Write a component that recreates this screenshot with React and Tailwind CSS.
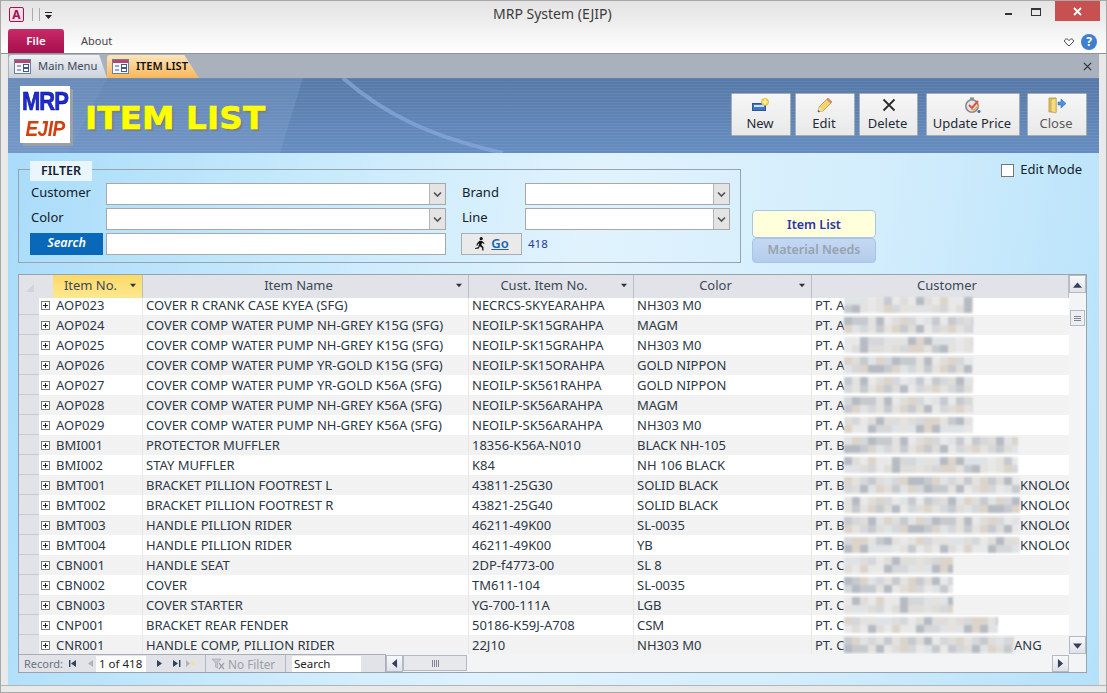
import { useMemo } from 'react';

const rows = [
  ['AOP023', 'COVER R CRANK CASE KYEA (SFG)', 'NECRCS-SKYEARAHPA', 'NH303 M0', 'PT. A', 129, ''],
  ['AOP024', 'COVER COMP WATER PUMP NH-GREY K15G (SFG)', 'NEOILP-SK15GRAHPA', 'MAGM', 'PT. A', 129, ''],
  ['AOP025', 'COVER COMP WATER PUMP NH-GREY K15G (SFG)', 'NEOILP-SK15GRAHPA', 'NH303 M0', 'PT. A', 129, ''],
  ['AOP026', 'COVER COMP WATER PUMP YR-GOLD K15G (SFG)', 'NEOILP-SK15ORAHPA', 'GOLD NIPPON', 'PT. A', 129, ''],
  ['AOP027', 'COVER COMP WATER PUMP YR-GOLD K56A (SFG)', 'NEOILP-SK561RAHPA', 'GOLD NIPPON', 'PT. A', 129, ''],
  ['AOP028', 'COVER COMP WATER PUMP NH-GREY K56A (SFG)', 'NEOILP-SK56ARAHPA', 'MAGM', 'PT. A', 129, ''],
  ['AOP029', 'COVER COMP WATER PUMP NH-GREY K56A (SFG)', 'NEOILP-SK56ARAHPA', 'NH303 M0', 'PT. A', 129, ''],
  ['BMI001', 'PROTECTOR MUFFLER', '18356-K56A-N010', 'BLACK NH-105', 'PT. B', 174, ''],
  ['BMI002', 'STAY MUFFLER', 'K84', 'NH 106 BLACK', 'PT. B', 174, ''],
  ['BMT001', 'BRACKET PILLION FOOTREST L', '43811-25G30', 'SOLID BLACK', 'PT. B', 176, 'KNOLOG'],
  ['BMT002', 'BRACKET PILLION FOOTREST R', '43821-25G40', 'SOLID BLACK', 'PT. B', 176, 'KNOLOG'],
  ['BMT003', 'HANDLE PILLION RIDER', '46211-49K00', 'SL-0035', 'PT. B', 176, 'KNOLOG'],
  ['BMT004', 'HANDLE PILLION RIDER', '46211-49K00', 'YB', 'PT. B', 176, 'KNOLOG'],
  ['CBN001', 'HANDLE SEAT', '2DP-f4773-00', 'SL 8', 'PT. C', 109, ''],
  ['CBN002', 'COVER', 'TM611-104', 'SL-0035', 'PT. C', 109, ''],
  ['CBN003', 'COVER STARTER', 'YG-700-111A', 'LGB', 'PT. C', 109, ''],
  ['CNP001', 'BRACKET REAR FENDER', '50186-K59J-A708', 'CSM', 'PT. C', 154, ''],
  ['CNR001', 'HANDLE COMP, PILLION RIDER', '22J10', 'NH303 M0', 'PT. C', 170, 'ANG'],
];

const mosaicColors = ['#dfddda', '#d5d7da', '#c6c9ce', '#e4e2df', '#dcd4ca', '#e8e8e8', '#b6bbc3', '#e0e3e6'];

// the customer names are pixelated out in the picture
function Mosaic({ width, seed }) {
  const cells = useMemo(() => {
    const out = [];
    let n = seed * 7 + 3;
    for (let i = 0; i < Math.ceil(width / 8) * 2; i++) {
      n = (n * 31 + 11) % 97;
      out.push(mosaicColors[n % mosaicColors.length]);
    }
    return out;
  }, [width, seed]);
  return (
    <span className="grid h-[16px] shrink-0 grid-flow-col grid-rows-2 overflow-hidden blur-[0.8px]" style={{ width }}>
      {cells.map((c, i) => (
        <span key={i} className="w-[8px]" style={{ background: c }} />
      ))}
    </span>
  );
}

const FormIcon = () => (
  <svg width="17" height="15" viewBox="0 0 17 15" className="shrink-0">
    <rect x="0.5" y="0.5" width="16" height="14" fill="#f4f6fa" stroke="#6d7f99" />
    <rect x="1" y="1" width="15" height="3" fill="#b5476f" />
    <path d="M3 7h4M3 11h4" stroke="#3c5a8c" strokeWidth="1.2" />
    <rect x="9.5" y="5.5" width="5" height="3" fill="#fff" stroke="#3c5a8c" />
    <rect x="9.5" y="9.5" width="5" height="3" fill="#fff" stroke="#3c5a8c" />
  </svg>
);

const NewIcon = () => (
  <svg width="18" height="14" viewBox="0 0 18 14">
    <rect x="0.5" y="5.5" width="13" height="7" fill="#3f78c9" stroke="#2a5597" />
    <rect x="2" y="7" width="10" height="2" fill="#cfe2fa" />
    <circle cx="13" cy="4" r="3.6" fill="#f4d75a" stroke="#d9a92a" strokeWidth="0.6" />
    <path d="M10.5 4h5M13 1.5v5" stroke="#fff6c0" strokeWidth="1.2" />
  </svg>
);

const PencilIcon = () => (
  <svg width="18" height="18" viewBox="0 0 18 18">
    <path d="M2 16l1-5L12 2l4 4-9 9z" fill="#f2d66b" stroke="#a98a32" strokeWidth="0.7" />
    <path d="M12 2l4 4-1.6 1.6-4-4z" fill="#d98a7a" />
    <path d="M2 16l1-5 4 4z" fill="#efe2c4" />
    <path d="M2 16l.4-2 1.6 1.6z" fill="#333" />
  </svg>
);

const CrossIcon = () => (
  <svg width="14" height="14" viewBox="0 0 14 14">
    <path d="M1.5 1.5l11 11M12.5 1.5l-11 11" stroke="#2b2b2b" strokeWidth="1.8" />
  </svg>
);

const UpdateIcon = () => (
  <svg width="18" height="18" viewBox="0 0 18 18">
    <circle cx="8" cy="10" r="6.2" fill="#e4e4e4" stroke="#8a8a8a" strokeWidth="1.6" />
    <rect x="6" y="1.5" width="4" height="2" fill="#8a8a8a" />
    <path d="M5 9l3 3 6-7" fill="none" stroke="#d9534f" strokeWidth="2" />
    <path d="M7 13l3 1 5-5" fill="none" stroke="#e8a33d" strokeWidth="1.2" />
    <circle cx="15" cy="15.5" r="1.6" fill="#3c6fb5" />
  </svg>
);

const DoorIcon = () => (
  <svg width="18" height="18" viewBox="0 0 18 18">
    <path d="M1 2h7v14H1z" fill="#e8c65a" stroke="#a98a32" strokeWidth="0.7" />
    <path d="M3 3.5l5-1.5v15l-5-1.5z" fill="#f4dc82" stroke="#a98a32" strokeWidth="0.5" />
    <path d="M10 6h3V3l5 4.5-5 4.5V9h-3z" fill="#4f8fe0" stroke="#2f62ad" strokeWidth="0.5" />
  </svg>
);

const RunnerIcon = () => (
  <svg width="12" height="14" viewBox="0 0 12 14">
    <circle cx="7.2" cy="1.7" r="1.6" fill="#111" />
    <path d="M5.5 3.8L8 4l2.6 2.2-.7.8L8 5.8 7.4 8l2 2 .1 3.6h-1.2L8 10.8 5.8 9.2l-1 2.2L1.3 12l-.2-1.1 3-.7L5.3 6.4l-1.2.5-.8 1.9-1-.4 1-2.5z" fill="#111" />
  </svg>
);

const Triangle = ({ dir, color = '#33415c', size = 7 }) => {
  const pts = { up: '0,6 7,6 3.5,2', down: '0,2 7,2 3.5,6', left: '5.5,0 5.5,7 1.5,3.5', right: '1.5,0 1.5,7 5.5,3.5' };
  return (
    <svg width={size} height={size} viewBox="0 0 7 7" className="shrink-0">
      <polygon points={pts[dir]} fill={color} />
    </svg>
  );
};

const ToolButton = ({ icon, label, width, faded }) => (
  <button
    className={`flex h-[43px] flex-col items-center justify-end rounded-[1px] border border-[#a5adb5] bg-[linear-gradient(#f6f6f6,#e9e9e9)] pb-[4px] text-[13px] leading-[16px] ${
      faded ? 'text-[#5a5a5a]' : 'text-[#1e2a36]'
    } ${width}`}
  >
    <span className="flex h-[20px] items-center justify-center">{icon}</span>
    <span className="-translate-x-[1px]">{label}</span>
  </button>
);

const Combo = ({ width }) => (
  <div className={`flex h-[22px] border border-[#a8a8a8] bg-white ${width}`}>
    <div className="flex-1" />
    <div className="flex w-[16px] items-center justify-center border-l border-[#b5b5b5] bg-[#e4e4e4]">
      <svg width="9" height="7" viewBox="0 0 9 7">
        <path d="M1 1.5l3.5 3.5L8 1.5" fill="none" stroke="#555" strokeWidth="1.7" />
      </svg>
    </div>
  </div>
);

const HeaderCell = ({ label, active, last }) => (
  <div
    className={`relative flex items-center justify-center border-r border-[#b9bec6] pb-[3px] ${
      active ? 'bg-[linear-gradient(#fbd968,#fde890)]' : 'bg-[#e1e3e8]'
    } ${last ? 'pl-[14px]' : 'pr-[14px]'}`}
  >
    <span>{label}</span>
    {!last && (
      <span className="absolute right-[6px] top-[7px]">
        <Triangle dir="down" size={6} color="#333" />
      </span>
    )}
  </div>
);

const ScrollButton = ({ dir, className = '' }) => (
  <div className={`flex h-[18px] w-[17px] shrink-0 items-center justify-center border border-[#b4bac4] bg-[linear-gradient(#f7f8fa,#dfe2e8)] ${className}`}>
    <Triangle dir={dir} size={9} />
  </div>
);

const NavIcon = ({ children, className = '' }) => (
  <svg width="9" height="9" viewBox="0 0 9 9" className={`shrink-0 ${className}`}>
    {children}
  </svg>
);

export default function App() {
  return (
    <div className="flex h-[693px] w-[1107px] flex-col overflow-hidden border border-[#a8a8a8] bg-[#e9e9e9] font-['Noto_Sans',sans-serif] text-[13px] text-[#2c3846]">
      {/* title bar */}
      <div className="flex h-[27px] shrink-0 items-start bg-[linear-gradient(#e4e4e4,#f0f0f0)]">
        <div className="flex w-[400px] items-center gap-[5px] pl-[8px] pt-[6px]">
          <div className="flex h-[15px] w-[15px] items-center justify-center rounded-[2px] border border-[#a8114f] bg-[#f7dbe6] text-[12px] font-bold leading-none text-[#a8114f]">
            A
          </div>
          <div className="ml-[3px] h-[13px] w-[1px] bg-[#aaa]" />
          <div className="ml-[1px] h-[13px] w-[1px] bg-[#aaa]" />
          <svg width="7" height="8" viewBox="0 0 7 8">
            <path d="M0 1h7v1H0zM0 4h7L3.5 8z" fill="#222" />
          </svg>
        </div>
        <div className="flex-1 pl-[92px] pt-[3px] text-[14px] leading-[20px] text-[#3c3c3c]">MRP System (EJIP)</div>
        <div className="mr-[6px] flex items-start">
          <div className="mt-[12px] mr-[19px] h-[2px] w-[7px] bg-[#333]" />
          <div className="mt-[7px] mr-[14px] h-[8px] w-[10px] border border-t-2 border-[#333]" />
          <div className="flex h-[20px] w-[45px] items-center justify-center bg-[#c75050]">
            <svg width="9" height="9" viewBox="0 0 9 9">
              <path d="M1 1l7 7M8 1L1 8" stroke="#fff" strokeWidth="1.8" />
            </svg>
          </div>
        </div>
      </div>

      {/* ribbon tabs */}
      <div className="flex h-[26px] shrink-0 items-end border-b border-[#8e9299] bg-[linear-gradient(#f1f1f1,#ffffff)]">
        <div className="ml-[7px] flex h-[24px] w-[56px] items-center justify-center rounded-t-[3px] bg-[linear-gradient(#c92a68,#a70f4d)] text-[11.5px] font-semibold text-white">
          File
        </div>
        <div className="ml-[17px] flex h-[24px] items-center text-[11px] text-[#444]">About</div>
        <div className="ml-auto mb-[3px] mr-[9px] flex items-center gap-[7px]">
          <svg width="10" height="9" viewBox="0 0 10 9">
            <path d="M5 8L1 4.2C-.2 2.6 1 .8 2.6 1 3.8 1 4.5 1.7 5 2.6 5.5 1.7 6.2 1 7.4 1 9 .8 10.2 2.6 9 4.2z" fill="#fff" stroke="#444" strokeWidth="1" />
          </svg>
          <div className="flex h-[16px] w-[16px] items-center justify-center rounded-full bg-[#3f7fd0] text-[12px] font-bold leading-none text-white">
            ?
          </div>
        </div>
      </div>

      {/* document area */}
      <div className="mx-[7px] flex min-h-0 flex-1 flex-col">
        {/* document tabs */}
        <div className="flex h-[24px] shrink-0 items-end bg-[#a9b1bd] pl-[1px]">
          <div className="flex h-[23px] w-[98px] items-center gap-[7px] rounded-t-[3px] bg-[linear-gradient(#eef0f3,#cdd2da)] pl-[5px] text-[11.2px] text-[#3b4b5e] [clip-path:polygon(0_0,92%_0,100%_100%,0_100%)]">
            <FormIcon />
            Main Menu
          </div>
          <div className="flex h-[23px] w-[92px] items-center gap-[7px] rounded-t-[3px] bg-[linear-gradient(#fde6bd,#f9b659)] pl-[5px] text-[11px] font-semibold text-[#111] [clip-path:polygon(0_0,84%_0,100%_100%,0_100%)]">
            <FormIcon />
            ITEM LIST
          </div>
          <svg width="9" height="9" viewBox="0 0 10 10" className="mb-[7px] ml-auto mr-[7px]">
            <path d="M1 1l8 8M9 1L1 9" stroke="#333" strokeWidth="1.4" />
          </svg>
        </div>

        {/* form header */}
        <div className="relative flex h-[75px] shrink-0 items-start bg-[repeating-linear-gradient(#ffffff08_0px,#ffffff08_1px,#00000008_1px,#00000008_3px),linear-gradient(#5a7dac,#6a91c6)] pl-[12px]">
          <svg width="1091" height="75" viewBox="0 0 1091 75" className="absolute left-0 top-0">
            <path d="M0 0H100L60 75H0z" fill="#8fb0d8" opacity="0.35" />
            <path d="M100 0H295L272 75H60z" fill="#8fb0d8" opacity="0.25" />
            <path d="M335 0C375 35 420 58 495 75" fill="none" stroke="#84a8d8" strokeWidth="4" opacity="0.75" />
          </svg>
          <div className="relative mt-[8px] flex h-[57px] w-[50px] flex-col items-center bg-white pt-[2px] leading-none shadow-[3px_3px_0_#9aa0a8]">
            <span className="origin-top scale-y-[1.2] font-['Liberation_Sans',sans-serif] text-[22px] font-bold tracking-[-1px] text-[#1a2be0] [-webkit-text-stroke:0.5px_#101060]">MRP</span>
            <span className="mt-[8px] origin-top scale-y-[1.15] font-['Liberation_Sans',sans-serif] text-[19px] font-bold italic tracking-[-0.5px] text-[#d23f10]">EJIP</span>
          </div>
          <div className="relative ml-[15px] mt-[20px] font-['DejaVu_Sans',sans-serif] text-[32.5px] font-bold leading-[40px] tracking-[0.2px] text-[#ffff00] [-webkit-text-stroke:0.6px_#ffff00] [text-shadow:2px_2px_1px_#7a7f86]">
            ITEM LIST
          </div>
          <div className="relative ml-auto mr-[12px] mt-[15px] flex">
            <ToolButton icon={<NewIcon />} label="New" width="w-[60px]" />
            <div className="w-[4px]" />
            <ToolButton icon={<PencilIcon />} label="Edit" width="w-[60px]" />
            <div className="w-[4px]" />
            <ToolButton icon={<CrossIcon />} label="Delete" width="w-[59px]" />
            <div className="w-[8px]" />
            <ToolButton icon={<UpdateIcon />} label="Update Price" width="w-[94px]" />
            <div className="w-[7px]" />
            <ToolButton icon={<DoorIcon />} label="Close" width="w-[60px]" faded />
          </div>
        </div>

        {/* form body */}
        <div className="flex min-h-0 flex-1 flex-col bg-[linear-gradient(100deg,#a9dcfa_0%,#c6e9fc_25%,#e0f3fd_50%,#d2edfc_75%,#b4e1fa_100%)] pl-[10px] pr-[12px]">
          <div className="flex h-[110px] shrink-0">
            <div className="relative mt-[16px] h-[94px] w-[723px] border border-[#9aa3ab]">
              <div className="absolute -top-[9px] left-[11px] flex h-[20px] w-[62px] items-center justify-center bg-[#e9f6fd] text-[12.5px] font-semibold text-[#14202c]">
                FILTER
              </div>
              <div className="flex pl-[11px] pt-[13px]">
                <div className="w-[433px]">
                  <div className="flex h-[25px] items-start">
                    <span className="w-[76px] pl-[1px] leading-[18px] text-[#14202c]">Customer</span>
                    <Combo width="w-[340px]" />
                  </div>
                  <div className="flex h-[25px] items-start">
                    <span className="w-[76px] pl-[1px] leading-[18px] text-[#14202c]">Color</span>
                    <Combo width="w-[340px]" />
                  </div>
                  <div className="flex h-[22px] items-start">
                    <div className="mr-[3px] flex h-[22px] w-[73px] items-center justify-center bg-[#0a68b8] pb-[2px] text-[12.5px] font-semibold italic text-white">
                      Search
                    </div>
                    <div className="h-[22px] w-[340px] border border-[#a8a8a8] bg-white" />
                  </div>
                </div>
                <div className="ml-[-2px]">
                  <div className="flex h-[25px] items-start">
                    <span className="w-[64px] pl-[1px] leading-[18px] text-[#14202c]">Brand</span>
                    <Combo width="w-[205px]" />
                  </div>
                  <div className="flex h-[25px] items-start">
                    <span className="w-[64px] pl-[1px] leading-[18px] text-[#14202c]">Line</span>
                    <Combo width="w-[205px]" />
                  </div>
                  <div className="flex h-[22px] items-center">
                    <div className="flex h-[22px] w-[61px] items-center justify-center gap-[5px] border border-[#a5adb5] bg-[#eaeaea] font-semibold text-[#1464b4]">
                      <RunnerIcon />
                      <span className="underline">Go</span>
                    </div>
                    <span className="ml-[6px] text-[11.5px] text-[#2b35a8]">418</span>
                  </div>
                </div>
              </div>
            </div>

            <div className="ml-[11px] mt-[57px] flex w-[124px] flex-col">
              <div className="flex h-[28px] items-center justify-center rounded-[4px] border border-[#a8c4e8] bg-[#ffffdc] pt-[3px] text-[12.5px] font-semibold text-[#2b35a8]">
                Item List
              </div>
              <div className="flex h-[26px] items-center justify-center rounded-[4px] border border-[#a8c4e8] bg-[linear-gradient(#c4d8f2,#b4ccec)] text-[12.5px] font-semibold text-[#98a2ae]">
                Material Needs
              </div>
            </div>

            <div className="ml-auto mr-[5px] mt-[10px] flex h-[14px] items-center gap-[6px] text-[#14202c]">
              <div className="h-[13px] w-[13px] border border-[#777] bg-white" />
              Edit Mode
            </div>
          </div>

          {/* datasheet */}
          <div className="mt-[11px] flex h-[399px] w-[1069px] shrink-0 flex-col border border-[#9aa3ab] bg-white leading-[20px]">
            <div className="flex min-h-0 flex-1">
              <div className="min-w-0 flex-1 overflow-hidden">
                <div className="grid h-[20px] grid-cols-[34px_90px_326px_165px_178px_1fr] text-[#3d4856]">
                  <div className="flex items-center justify-center border-r border-[#e1e3e8] bg-[#e1e3e8]">
                    <span className="mr-[12px] mt-[2px] h-0 w-0 border-b-[8px] border-l-[8px] border-b-[#cfd3da] border-l-transparent" />
                  </div>
                  <HeaderCell label="Item No." active />
                  <HeaderCell label="Item Name" />
                  <HeaderCell label="Cust. Item No." />
                  <HeaderCell label="Color" />
                  <HeaderCell label="Customer" last />
                </div>
                {rows.map((r, i) => (
                  <div
                    key={r[0]}
                    className={`grid h-[20px] grid-cols-[20px_14px_90px_326px_165px_178px_1fr] overflow-hidden ${
                      i % 2 ? 'bg-[#f2f2f2]' : 'bg-white'
                    }`}
                  >
                    <div className="border-b border-[#c8ccd2] bg-[#e1e3e8]" />
                    <div className="flex items-center justify-center">
                      <div className="relative h-[9px] w-[9px] -translate-x-[1px] border border-[#777] bg-white">
                        <div className="absolute left-[1px] top-[3px] h-[1px] w-[5px] bg-[#222]" />
                        <div className="absolute left-[3px] top-[1px] h-[5px] w-[1px] bg-[#222]" />
                      </div>
                    </div>
                    <div className="border-r border-[#e8e8e8] pl-[3px]">{r[0]}</div>
                    <div className="truncate border-r border-[#e8e8e8] pl-[3px]">{r[1]}</div>
                    <div className="border-r border-[#e8e8e8] pl-[3px]">{r[2]}</div>
                    <div className="border-r border-[#e8e8e8] pl-[3px]">{r[3]}</div>
                    <div className="flex items-center overflow-hidden whitespace-nowrap pl-[3px]">
                      <span className="w-[29px] shrink-0">{r[4]}</span>
                      <Mosaic width={r[5]} seed={i} />
                      <span>{r[6]}</span>
                    </div>
                  </div>
                ))}
              </div>
              <div className="flex w-[17px] shrink-0 flex-col items-center bg-[#f3f4f6]">
                <ScrollButton dir="up" />
                <div className="mt-[17px] flex h-[16px] w-[15px] flex-col items-center justify-center gap-[1px] border border-[#b4bac4] bg-[#eceef2]">
                  <div className="h-[1px] w-[7px] bg-[#7d8592]" />
                  <div className="h-[1px] w-[7px] bg-[#7d8592]" />
                  <div className="h-[1px] w-[7px] bg-[#7d8592]" />
                </div>
                <ScrollButton dir="down" className="mt-auto" />
              </div>
            </div>

            {/* record navigator and horizontal scrollbar */}
            <div className="flex h-[18px] shrink-0 bg-[#f3f4f6]">
              <div className="flex w-[367px] items-center border-t border-r border-[#a8adb5] bg-[#e1e3e8] text-[11px] text-[#6a7280]">
                <span className="ml-[5px]">Record:</span>
                <NavIcon className="ml-[5px]">
                  <path d="M1 1h1.4v7H1zM8 1v7L3 4.5z" fill="#33415c" />
                </NavIcon>
                <NavIcon className="ml-[9px]">
                  <path d="M7 1v7L2 4.5z" fill="#b0b5bd" />
                </NavIcon>
                <div className="ml-[1px] h-[16px] w-[50px] bg-white pl-[3px] text-[11.5px] leading-[16px] text-[#222]">1 of 418</div>
                <NavIcon className="ml-[9px]">
                  <path d="M2 1v7l5-3.5z" fill="#33415c" />
                </NavIcon>
                <NavIcon className="ml-[8px]">
                  <path d="M1 1v7l5-3.5zM7 1h1.4v7H7z" fill="#33415c" />
                </NavIcon>
                <NavIcon className="ml-[5px]">
                  <path d="M0 1v7l4-3.5z" fill="#b0b5bd" />
                  <rect x="5" y="2" width="4" height="4" fill="#efe2a8" />
                </NavIcon>
                <div className="ml-[10px] flex h-full w-[81px] items-center border-x border-[#b4bac4] pl-[5px] text-[11.8px] text-[#9aa0aa]">
                  <svg width="15" height="12" viewBox="0 0 15 12" className="mr-[2px] shrink-0">
                    <path d="M1 1h9L6.5 5v5L4.5 9V5z" fill="#c5c9cf" stroke="#9aa0aa" strokeWidth="0.6" />
                    <path d="M8 5l5 6M13 5l-5 6" stroke="#9aa0aa" strokeWidth="1.2" />
                  </svg>
                  No Filter
                </div>
                <div className="ml-[6px] h-[16px] w-[69px] bg-white pl-[2px] text-[11.5px] leading-[16px] text-[#222]">Search</div>
              </div>
              <ScrollButton dir="left" className="!h-[17px] mt-[1px]" />
              <div className="mt-[1px] flex h-[16px] w-[64px] items-center justify-center gap-[1px] border border-[#b4bac4] bg-[#e6e8ec]">
                <div className="h-[7px] w-[1px] bg-[#7d8592]" />
                <div className="h-[7px] w-[1px] bg-[#7d8592]" />
                <div className="h-[7px] w-[1px] bg-[#7d8592]" />
                <div className="h-[7px] w-[1px] bg-[#7d8592]" />
              </div>
              <ScrollButton dir="right" className="!h-[17px] ml-auto mr-[17px] mt-[1px]" />
            </div>
          </div>
        </div>
      </div>
      <div className="h-[7px] shrink-0 border-t border-[#b5b5b5] bg-[#e9e9e9]" />
    </div>
  );
}
